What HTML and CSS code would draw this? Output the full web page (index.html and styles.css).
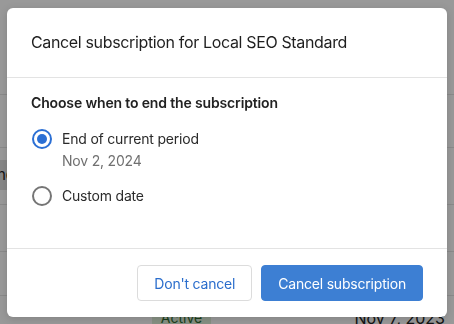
FILE: index.html
```html
<!DOCTYPE html>
<html>
<head>
<meta charset="utf-8">
<link rel="stylesheet" href="styles.css">
</head>
<body>
<div class="page">
  <div class="row r1"></div>
  <div class="row r2"></div>
  <div class="row r3"><div class="chip">nd</div></div>
  <div class="row r4"></div>
  <div class="row r5"></div>
  <div class="row r6">
    <span class="badge">Active</span>
    <span class="date">Nov 7, 2023</span>
  </div>
</div>
<div class="backdrop"></div>
<div class="modal">
  <div class="modal-header">Cancel subscription for Local SEO Standard</div>
  <div class="modal-body">
    <div class="question">Choose when to end the subscription</div>
    <div class="options">
      <label class="option">
        <span class="radio checked"></span>
        <span class="option-text">
          <span class="option-label">End of current period</span>
          <span class="option-sub">Nov 2, 2024</span>
        </span>
      </label>
      <label class="option">
        <span class="radio"></span>
        <span class="option-text">
          <span class="option-label">Custom date</span>
        </span>
      </label>
    </div>
  </div>
  <div class="modal-footer">
    <button class="btn btn-secondary">Don't cancel</button>
    <button class="btn btn-primary">Cancel subscription</button>
  </div>
</div>
</body>
</html>
```

FILE: styles.css
```css
* { box-sizing: border-box; }
html, body {
  margin: 0;
  padding: 0;
  width: 454px;
  height: 324px;
  overflow: hidden;
  background: #fff;
  font-family: Inter, "Noto Sans", sans-serif;
}
.page {
  display: flex;
  flex-direction: column;
}
.row {
  border-bottom: 1px solid #e6e6e6;
  position: relative;
}
.r1 { height: 95px; }
.r2 { height: 53px; }
.r3 { height: 57px; padding-top: 12px; }
.r4 { height: 47px; }
.r5 { height: 44px; }
.r6 {
  height: 40px;
  border-bottom: none;
  display: flex;
  align-items: flex-start;
  padding-top: 12px;
}
.chip {
  width: 60px;
  height: 30px;
  background: #e2e2e2;
  font-size: 15px;
  line-height: 30px;
  margin-left: -3px;
  color: #222;
}
.badge {
  margin-left: 152px;
  width: 59px;
  height: 20px;
  background: #e1f2dc;
  color: #2f6b2f;
  border-radius: 4px;
  font-size: 14px;
  text-align: center;
  line-height: 20px;
}
.date {
  margin-left: auto;
  margin-right: 9px;
  font-size: 16px;
  color: #222;
  line-height: 20px;
}
.backdrop {
  position: fixed;
  inset: 0;
  background: rgba(0, 0, 0, 0.4);
}
.modal {
  position: absolute;
  left: 7px;
  top: 8px;
  width: 440px;
  height: 309px;
  background: #fff;
  border-radius: 6px;
  box-shadow: 0 2px 8px rgba(0,0,0,0.15);
  display: flex;
  flex-direction: column;
  color: #222;
}
.modal-header {
  padding: 24px 24px;
  font-size: 16px;
  letter-spacing: -0.35px;
  line-height: 21px;
  height: 70px;
  border-bottom: 1px solid #e3e3e3;
  color: #1f1f1f;
}
.modal-body {
  flex: 1;
  padding: 16px 24px 0 24px;
  border-bottom: 1px solid #e3e3e3;
}
.question {
  font-size: 14px;
  font-weight: 600;
  letter-spacing: -0.15px;
  line-height: 18px;
  color: #222;
}
.options {
  margin-top: 17px;
  display: flex;
  flex-direction: column;
  gap: 15px;
}
.option {
  display: flex;
  align-items: flex-start;
  gap: 10px;
}
.radio {
  width: 20px;
  height: 20px;
  border-radius: 50%;
  border: 2px solid #757575;
  flex: none;
  margin-left: 1px;
  display: flex;
  align-items: center;
  justify-content: center;
}
.radio.checked {
  border-color: #2b6fd4;
}
.radio.checked::after {
  content: "";
  width: 10px;
  height: 10px;
  border-radius: 50%;
  background: #2b6fd4;
}
.option-text {
  display: flex;
  flex-direction: column;
  gap: 2px;
}
.option-label {
  font-size: 14px;
  letter-spacing: -0.2px;
  line-height: 20px;
  color: #2a2a2a;
}
.option-sub {
  font-size: 14px;
  letter-spacing: -0.2px;
  line-height: 20px;
  color: #707070;
}
.modal-footer {
  height: 68px;
  padding: 16px 24px;
  display: flex;
  justify-content: flex-end;
  gap: 9px;
}
.btn {
  height: 36px;
  border-radius: 4px;
  font-family: Inter, "Noto Sans", sans-serif;
  font-size: 14px;
  letter-spacing: -0.2px;
  padding: 0 16px;
  cursor: pointer;
}
.btn-secondary {
  background: #fff;
  border: 1px solid #dcdcdc;
  color: #2a6dcc;
}
.btn-primary {
  background: #3d7fd3;
  border: 1px solid #3d7fd3;
  color: #fff;
}
```
